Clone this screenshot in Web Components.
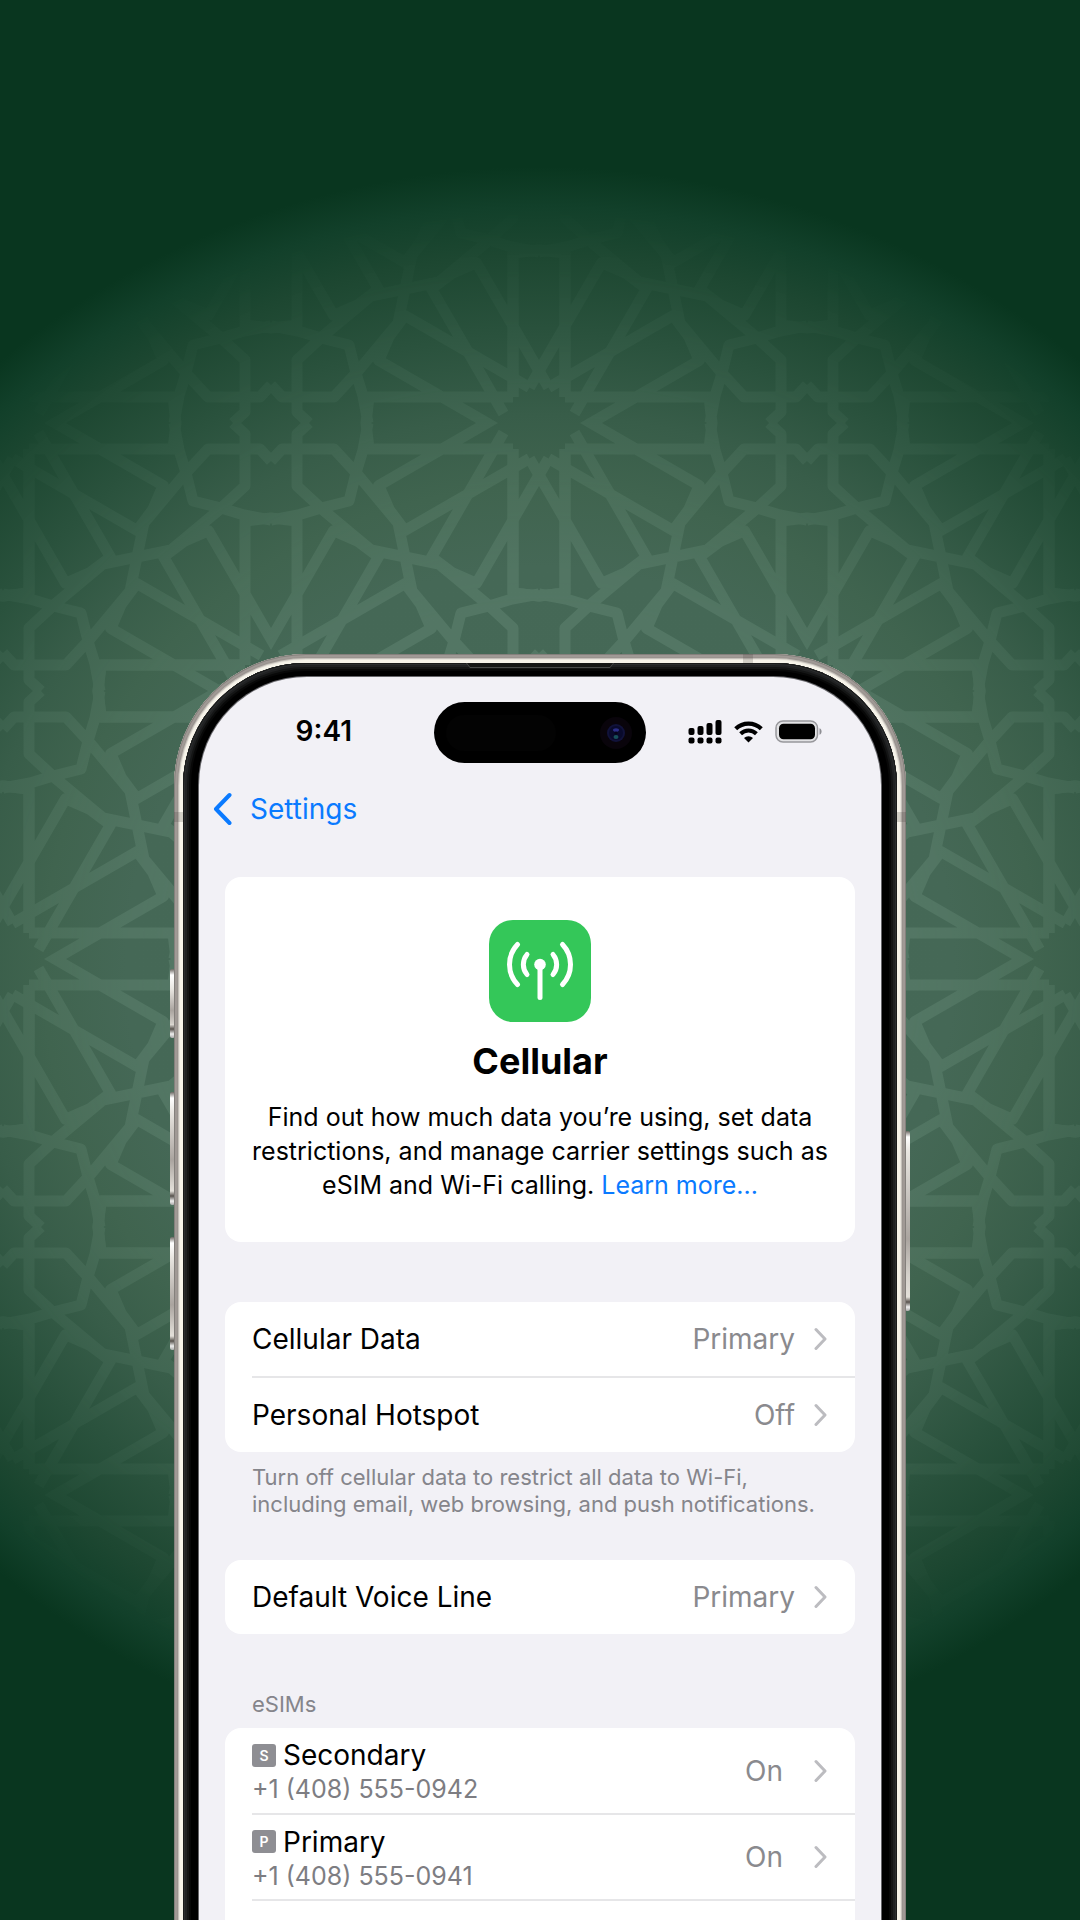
<!DOCTYPE html>
<html lang="en">
<head>
<meta charset="utf-8">
<meta name="viewport" content="width=device-width, initial-scale=1">
<title>Cellular</title>
<style>
  html, body { margin: 0; height: 100%; }
  body { font-family: Inter, "Liberation Sans", sans-serif; background: #09361f; color: #000; overflow: hidden; }
</style>
</head>
<body>
<promo-stage>
  <phone-frame>
    <status-bar slot="status" time="9:41"></status-bar>
    <nav-back slot="nav">Settings</nav-back>
    <hero-card heading="Cellular">Find out how much data you’re using, set data restrictions, and manage carrier settings such as eSIM and Wi-Fi calling. <a slot="link" href="#learn">Learn more...</a></hero-card>
    <settings-group class="first">
      <settings-row value="Primary">Cellular Data</settings-row>
      <settings-row value="Off">Personal Hotspot</settings-row>
      <span slot="footer">Turn off cellular data to restrict all data to Wi-Fi, including email, web browsing, and push notifications.</span>
    </settings-group>
    <settings-group>
      <settings-row value="Primary">Default Voice Line</settings-row>
    </settings-group>
    <settings-group>
      <span slot="header">eSIMs</span>
      <settings-row value="On" badge="S" detail="+1 (408) 555-0942">Secondary</settings-row>
      <settings-row value="On" badge="P" detail="+1 (408) 555-0941">Primary</settings-row>
      <settings-row value="" badge="" detail=""></settings-row>
    </settings-group>
  </phone-frame>
</promo-stage>

<script>
const define = (name, html, setup) => {
  const template = document.createElement('template');
  template.innerHTML = html;
  customElements.define(name, class extends HTMLElement {
    constructor() {
      super();
      this.attachShadow({ mode: 'open' }).append(template.content.cloneNode(true));
    }
    connectedCallback() { if (setup) setup(this, this.shadowRoot); }
  });
};

/* Geometric backdrop: one quadrant runs from an eight-point star (0,0) to the
   next one (268,268); twelve-fold rosettes sit on the other two corners. */
const quadrant = () => {
  const band = 'M38 0L26 11V63L52 87L100 127L134 134L168 141L216 181L242 205V257L230 268';
  const mirror = 'M0 38L11 26H63L87 52L127 100L134 134L141 168L181 216L205 242H257L268 230';
  const ring = 'M97 0L92 27L85 50L78 78L50 85L27 92L0 97';
  const ringFar = 'M268 171L241 176L218 183L190 190L183 218L176 241L171 268';
  let d = band + mirror + ring + ringFar;
  for (const [cx, cy, from] of [[268, 0, 90], [0, 268, 270]]) {
    for (let a = from; a <= from + 90; a += 30) {
      const c = Math.cos(a * Math.PI / 180), s = Math.sin(a * Math.PI / 180);
      const p = (t, side) => (cx + c * t - s * side).toFixed(1) + ' ' + (cy + s * t + c * side).toFixed(1);
      d += 'M' + p(26, -26) + 'L' + p(170, -26) + 'L' + p(173, 0) + 'L' + p(170, 26) + 'L' + p(26, 26);
    }
  }
  return d;
};

define('star-lattice', `
  <style>
    :host { display: block; }
    svg { display: block; width: 100%; height: 100%; }
  </style>
  <svg aria-hidden="true">
    <defs>
      <pattern id="tile" patternUnits="userSpaceOnUse" x="271" y="423" width="536" height="536">
        <g fill="none" stroke="#8fb5a0" stroke-width="11" stroke-linejoin="round">
          <path/>
          <path transform="translate(536 0) scale(-1 1)"/>
          <path transform="translate(0 536) scale(1 -1)"/>
          <path transform="translate(536 536) scale(-1 -1)"/>
        </g>
      </pattern>
    </defs>
    <rect width="100%" height="100%" fill="url(#tile)"/>
  </svg>`, (host, root) => {
  const d = quadrant();
  root.querySelectorAll('path').forEach(p => p.setAttribute('d', d));
});

define('promo-stage', `
  <style>
    :host {
      display: grid; grid-template: 100vh / 100%; overflow: hidden;
      background: radial-gradient(828px 800px at 50% 967px, #466957 0%, #456856 50%, #40644f 60%, #385d49 69%, #2a523d 79%, #1d4731 89%, #12402a 95%, #09361f 100%);
    }
    star-lattice, main { grid-area: 1 / 1; }
    star-lattice {
      opacity: .19;
      -webkit-mask-image: radial-gradient(828px 800px at 50% 967px, #000 45%, transparent 96%);
      mask-image: radial-gradient(828px 800px at 50% 967px, #000 45%, transparent 96%);
    }
    main { display: flex; justify-content: center; align-items: flex-start; padding-top: 654px; position: relative; }
  </style>
  <star-lattice></star-lattice>
  <main><slot></slot></main>`);

define('phone-frame', `
  <style>
    :host { display: block; position: relative; flex: 0 1 732px; }
    .metal {
      position: relative; padding: 9px; border-radius: 132px; background: #f7f4ea;
      box-shadow: inset 0 0 0 1px #84807c, inset 0 0 0 3px #a09995, inset 0 0 0 4px #9a948f, inset 0 0 0 5px #c4bfb9, inset 0 0 0 6px #e9e5dc;
    }
    .bezel {
      padding: 14px 16px; border-radius: 123px; background: #000;
      box-shadow: inset 0 0 0 1px #1a1b1b, inset 0 0 0 2px #2c2e2f, inset 0 0 0 4px #202122, inset 0 0 0 6px #141515, inset 0 0 0 8px #080808;
    }
    .screen {
      background: #f2f1f6; border-radius: 108px; min-height: 1500px; box-shadow: 0 0 0 1px #66666a;
      display: flex; flex-direction: column;
    }
    .list { display: flex; flex-direction: column; padding: 50px 26px 0; }
    .key { position: absolute; width: 5px; left: -4px; border-radius: 2px; background: linear-gradient(#6d6863 0, #fff 6px, #e9e6e1 20px, #aaa49f 60%, #d5d1cb 80%, #e4e0da calc(100% - 14px), #57524d calc(100% - 9px), #eee calc(100% - 4px), #aaa 100%); }
    .key.a { top: 315px; height: 69px; }
    .key.b { top: 438px; height: 113px; }
    .key.c { top: 583px; height: 113px; }
    .key.d { top: 477px; height: 180px; left: auto; right: -4px; }
    .line { position: absolute; background: rgba(60, 55, 50, .2); }
    .line.t { top: 0; right: 153px; width: 10px; height: 9px; }
    .line.l { left: 0; top: 158px; width: 9px; height: 10px; }
    .line.r { right: 0; top: 158px; width: 9px; height: 10px; }
    .ear { position: absolute; top: 9px; left: 292px; right: 292px; height: 5px; display: block; }
    .ear svg { display: block; width: 100%; height: 100%; }
  </style>
  <i class="key a"></i><i class="key b"></i><i class="key c"></i><i class="key d"></i>
  <div class="metal">
    <div class="bezel">
      <div class="screen">
        <slot name="status"></slot>
        <slot name="nav"></slot>
        <div class="list"><slot></slot></div>
      </div>
    </div>
    <i class="line t"></i><i class="line l"></i><i class="line r"></i>
    <span class="ear"><svg viewBox="0 0 148 5" preserveAspectRatio="none"><path d="M0 0H148L144 5H4Z" fill="#4a4c4b"/><path d="M1 0H147L144 4H4Z" fill="#161716"/></svg></span>
  </div>`);

define('status-bar', `
  <style>
    :host { display: grid; grid-template-columns: 1fr 212px 1fr; padding: 25px 0 0; align-items: center; }
    time { font-size: 28px; font-weight: 600; line-height: 34px; text-align: right; padding-right: 82px; margin-bottom: 4px; }
    .island { display: block; width: 212px; height: 61px; }
    .icons { display: flex; align-items: center; gap: 12px; padding-left: 42px; margin-bottom: 2px; }
    svg { display: block; }
  </style>
  <time></time>
  <svg class="island" viewBox="0 0 212 61" aria-hidden="true">
    <rect width="212" height="61" rx="30.5" fill="#000"/>
    <rect x="12" y="13" width="110" height="36" rx="18" fill="#030303"/>
    <circle cx="182" cy="31" r="16" fill="#09040b"/>
    <circle cx="182" cy="31" r="9" fill="#11123a"/>
    <circle cx="182" cy="31" r="7" fill="#090a2c"/>
    <ellipse cx="182" cy="28" rx="3" ry="1.800" fill="#2b2e88"/>
    <ellipse cx="182" cy="35" rx="2.5" ry="2" fill="#17505b"/>
    <circle cx="182" cy="31" r="1.5" fill="#05051a"/>
  </svg>
  <div class="icons">
    <svg width="34" height="24" viewBox="0 0 34 24" role="img" aria-label="Signal">
      <rect x="0.5" y="8" width="6" height="7" rx="2"/><rect x="9.5" y="6" width="6" height="9" rx="2"/>
      <rect x="18.500" y="3" width="6" height="12" rx="2"/><rect x="27.500" y="0" width="6" height="15" rx="2"/>
      <rect x="0.5" y="17.500" width="6" height="6" rx="2"/><rect x="9.500" y="17.500" width="6" height="6" rx="2"/>
      <rect x="18.500" y="17.500" width="6" height="6" rx="2"/><rect x="27.500" y="17.500" width="6" height="6" rx="2"/>
    </svg>
    <svg width="29" height="22" viewBox="0 0 29 22" role="img" aria-label="Wi-Fi">
      <path d="M1.700 7.800A18.300 18.300 0 0 1 27.300 7.800" fill="none" stroke="#000" stroke-width="4.200"/>
      <path d="M6.600 12.700A11.300 11.300 0 0 1 22.400 12.700" fill="none" stroke="#000" stroke-width="4"/>
      <path d="M14.500 21.500L10 17A6.400 6.400 0 0 1 19 17Z"/>
    </svg>
    <svg width="48" height="23" viewBox="0 0 48 23" role="img" aria-label="Battery">
      <rect x="1" y="1" width="41.500" height="21" rx="7" fill="#e2e2e4" stroke="#98989c" stroke-width="1.500"/>
      <rect x="4" y="3.700" width="36" height="15.600" rx="4.500"/>
      <path d="M44.500 8.200C47.300 9.400 47.300 13.600 44.500 14.800Z" fill="#8e8e93"/>
    </svg>
  </div>`, (host, root) => {
  root.querySelector('time').textContent = host.getAttribute('time');
});

define('nav-back', `
  <style>
    :host { display: flex; padding: 28px 13px 0; }
    button { display: flex; align-items: center; gap: 18px; padding: 0; border: 0; background: none; font: 400 28px/36px Inter, "Liberation Sans", sans-serif; color: #0a7aff; }
    svg { display: block; }
  </style>
  <button type="button"><svg width="20" height="34" viewBox="0 0 20 34" aria-hidden="true"><path d="M17.500 3L4 17L17.500 31" fill="none" stroke="#0a7aff" stroke-width="4" stroke-linecap="round" stroke-linejoin="round"/></svg><slot></slot></button>`);

define('hero-card', `
  <style>
    :host { display: flex; flex-direction: column; align-items: center; background: #fff; border-radius: 16px; padding: 43px 24px 40px; text-align: center; }
    svg { display: block; }
    h1 { margin: 17px 0; font-size: 36px; line-height: 44px; font-weight: 700; }
    p { margin: 0; font-size: 25px; line-height: 34px; }
    ::slotted(a) { color: #0a7aff; text-decoration: none; }
  </style>
  <svg width="102" height="102" viewBox="0 0 102 102" aria-hidden="true">
    <rect width="102" height="102" rx="24" fill="#34c759"/>
    <g fill="none" stroke="#fff" stroke-width="5" stroke-linecap="round">
      <path d="M51 46V77.500"/>
      <path d="M38 34.500A15.500 15.500 0 0 0 38 54.500"/><path d="M64 34.500A15.500 15.500 0 0 1 64 54.500"/>
      <path d="M28.500 24.500A29 29 0 0 0 28.500 64.500"/><path d="M73.500 24.500A29 29 0 0 1 73.500 64.500"/>
    </g>
    <circle cx="51" cy="44.500" r="5.800" fill="#fff"/>
  </svg>
  <h1></h1>
  <p><slot></slot><slot name="link"></slot></p>`, (host, root) => {
  root.querySelector('h1').textContent = host.getAttribute('heading');
});

define('settings-group', `
  <style>
    :host { display: block; margin-top: 32px; }
    :host(.first) { margin-top: 60px; }
    .head, .foot { display: block; padding: 0 27px; font-size: 22px; line-height: 27px; color: #85858b; }
    .head.on { padding-top: 25px; padding-bottom: 10px; }
    .foot.on { padding-top: 12px; padding-bottom: 10px; }
    .card { background: #fff; border-radius: 16px; overflow: hidden; }
  </style>
  <div class="head"><slot name="header"></slot></div>
  <div class="card"><slot></slot></div>
  <div class="foot"><slot name="footer"></slot></div>`, (host, root) => {
  root.querySelector('.head').classList.toggle('on', !!host.querySelector('[slot=header]'));
  root.querySelector('.foot').classList.toggle('on', !!host.querySelector('[slot=footer]'));
});

define('settings-row', `
  <style>
    :host { display: block; padding-left: 27px; }
    button { display: flex; align-items: center; width: 100%; min-height: 74px; padding: 0 28px 0 0; border: 0; background: none; text-align: left; color: #000; font: 400 28px/34px Inter, "Liberation Sans", sans-serif; box-sizing: border-box; }
    :host(:not(:first-of-type)) button { min-height: 76px; border-top: 2px solid #e6e6e8; }
    :host([detail]) button { min-height: 85px; }
    :host([detail]:not(:first-of-type)) button { min-height: 86px; }
    :host([detail]) .text { padding-top: 3px; }
    .text { flex: 1; min-width: 0; }
    .title { display: flex; align-items: center; gap: 7px; }
    .badge { display: grid; place-items: center; width: 24px; height: 23px; border-radius: 3px; background: #8e8e93; color: #fff; font-size: 14px; line-height: 23px; font-weight: 600; }
    .detail { display: block; font-size: 25px; line-height: 34px; color: #7d7d82; }
    .value { color: #8a8a8e; margin-right: 19px; }
    :host([detail]) .value { margin-right: 31px; }
    svg { display: block; }
    [hidden] { display: none; }
  </style>
  <button type="button">
    <span class="text"><span class="title"><span class="badge"></span><span><slot></slot></span></span><span class="detail"></span></span>
    <span class="value"></span>
    <svg width="13" height="24" viewBox="0 0 13 24" aria-hidden="true"><path d="M2 2.500L11 12L2 21.500" fill="none" stroke="#bcbcc0" stroke-width="3" stroke-linecap="round" stroke-linejoin="round"/></svg>
  </button>`, (host, root) => {
  for (const key of ['badge', 'detail', 'value']) {
    const part = root.querySelector('.' + key);
    part.textContent = host.getAttribute(key) || '';
    part.hidden = !host.getAttribute(key);
  }
});
</script>
</body>
</html>
